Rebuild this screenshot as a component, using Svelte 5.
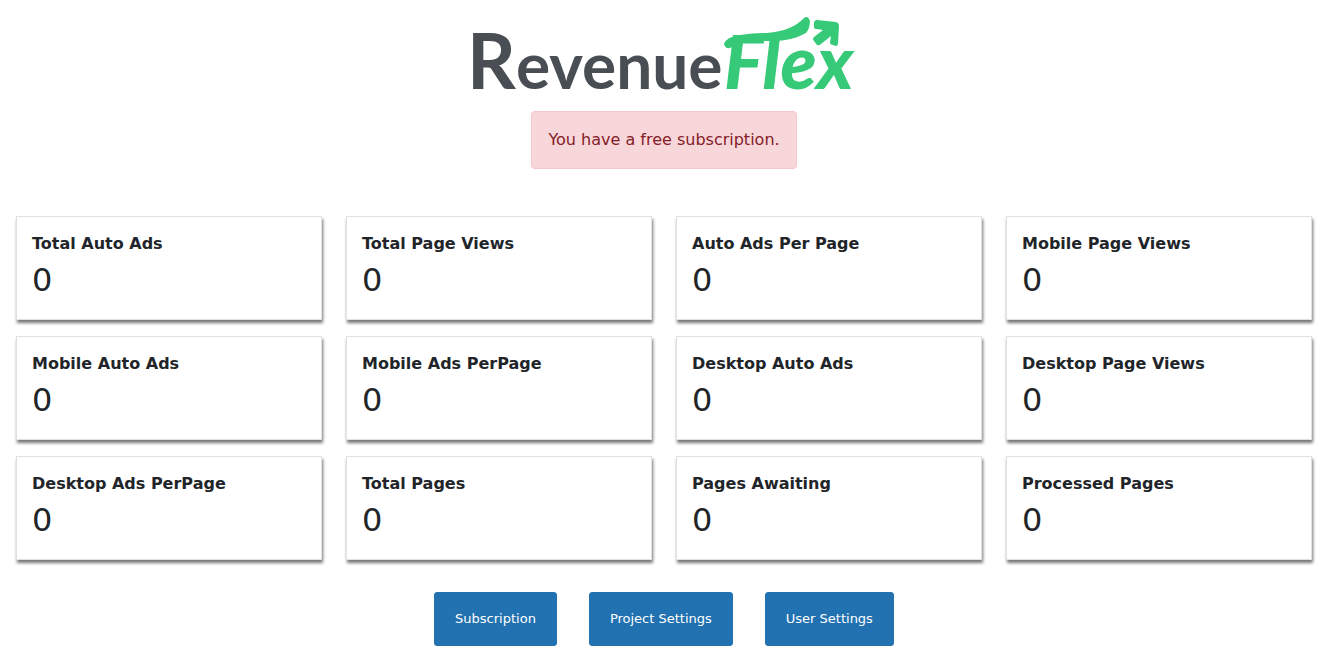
<script>
  const stats = [
    'Total Auto Ads', 'Total Page Views', 'Auto Ads Per Page', 'Mobile Page Views',
    'Mobile Auto Ads', 'Mobile Ads PerPage', 'Desktop Auto Ads', 'Desktop Page Views',
    'Desktop Ads PerPage', 'Total Pages', 'Pages Awaiting', 'Processed Pages'
  ].map((label) => ({ label, value: 0 }));
  const actions = ['Subscription', 'Project Settings', 'User Settings'];
</script>

<main class="page">
  <header class="top">
    <svg class="logo" viewBox="0 0 384 82" role="img" aria-label="RevenueFlex">
      <text class="revenue" x="-5" y="73"><tspan class="initial">R</tspan>evenue</text>
      <text class="flex" x="252" y="73">Flex</text>
      <path class="mark" d="M252 28Q254 21 268 19Q282 17 295 17Q320 15 332 2Q336 -1 338 5Q338 12 334 17Q318 26 297 25Q270 24 258 32Q253 33 252 28Z" />
      <path class="mark" d="M345 4Q342 4 342 7V11Q342 13 345 13L351 14L342 21Q340 23 342 25L345 29Q347 30 349 28L359 20L358 26Q358 29 361 29L364 30Q366 30 366 27L367 10Q367 7 364 6Z" />
    </svg>
    <p class="alert" role="status">You have a free subscription.</p>
  </header>

  <section class="stats" aria-label="Statistics">
    {#each stats as stat}
      <article class="card">
        <h2>{stat.label}</h2>
        <p>{stat.value}</p>
      </article>
    {/each}
  </section>

  <nav class="actions" aria-label="Settings">
    {#each actions as action}
      <button type="button">{action}</button>
    {/each}
  </nav>
</main>

<style>
  :global(body) {
    background: #fff;
  }
  .page {
    padding: 16px 27px 8px 16px;
    color: #212529;
    font-family: 'DejaVu Sans', sans-serif;
    font-size: 16px;
    line-height: 24px;
  }
  .top {
    display: flex;
    flex-direction: column;
    align-items: center;
    gap: 13px;
  }
  .logo {
    display: block;
    width: 384px;
    max-width: 100%;
    overflow: visible;
  }
  .revenue {
    fill: #494e54;
    font: 700 64px Lato, sans-serif;
  }
  .initial {
    font-size: 76px;
  }
  .flex {
    fill: #36ca78;
    font: italic 900 74px Lato, sans-serif;
  }
  .mark {
    fill: #36ca78;
  }
  .alert {
    margin: 0;
    padding: 16px;
    border: 1px solid #f5c6cb;
    border-radius: 4px;
    background: #f8d7da;
    color: #842029;
  }
  .stats {
    display: grid;
    grid-template-columns: repeat(4, minmax(0, 1fr));
    gap: 16px 24px;
    margin-top: 47px;
  }
  .card {
    padding: 15px;
    border: 1px solid #dee2e6;
    background: #fff;
    box-shadow: 1px 3px 3px #777;
  }
  .card h2 {
    margin: 0;
    font-size: 16px;
    font-weight: 700;
    line-height: 24px;
  }
  .card p {
    margin: 0;
    font-size: 32px;
    line-height: 48px;
  }
  @media (max-width: 900px) {
    .stats {
      grid-template-columns: repeat(2, minmax(0, 1fr));
    }
  }
  .actions {
    display: flex;
    flex-wrap: wrap;
    justify-content: center;
    gap: 32px;
    margin-top: 32px;
  }
  button {
    padding: 12px 20px;
    border: 1px solid #2271b1;
    border-radius: 3px;
    background: #2271b1;
    color: #fff;
    font: 13px/28px 'DejaVu Sans', sans-serif;
    cursor: pointer;
  }
</style>
